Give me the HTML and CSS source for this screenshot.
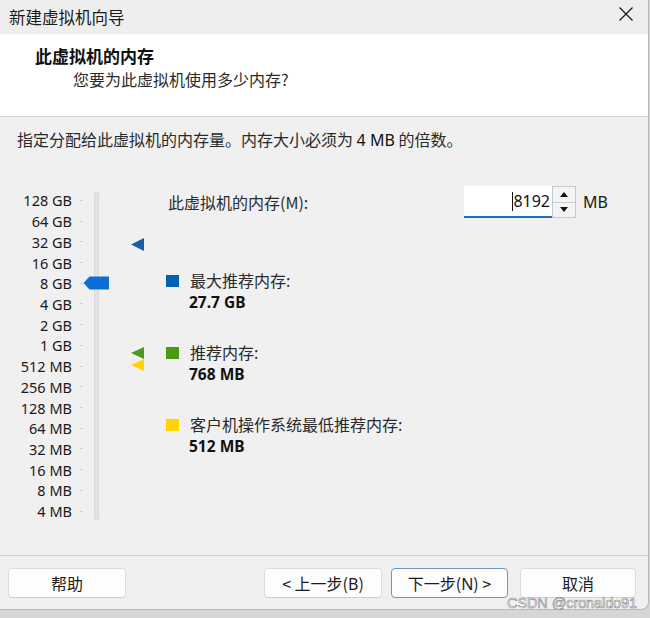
FILE: index.html
```html
<!DOCTYPE html>
<html lang="zh-CN">
<head>
<meta charset="utf-8">
<title>新建虚拟机向导</title>
<link rel="stylesheet" href="styles.css">
</head>
<body>
<div class="window">
  <div class="titlebar">
    <span class="title">新建虚拟机向导</span>
    <svg class="close" width="16" height="16" viewBox="0 0 16 16"><path d="M1.5 1.5 L14.5 14.5 M14.5 1.5 L1.5 14.5" stroke="#1a1a1a" stroke-width="1.3" fill="none"/></svg>
  </div>
  <div class="header">
    <div class="h-title">此虚拟机的内存</div>
    <div class="h-sub">您要为此虚拟机使用多少内存?</div>
  </div>
  <div class="desc">指定分配给此虚拟机的内存量。内存大小必须为 <span class="latin">4 MB</span> 的倍数。</div>
  <div class="main">
    <div class="scale">
      <div class="labels">
        <div class="lab"><span class="txt">128 GB</span><i class="tick"></i></div>
        <div class="lab"><span class="txt">64 GB</span><i class="tick"></i></div>
        <div class="lab"><span class="txt">32 GB</span><i class="tick"></i></div>
        <div class="lab"><span class="txt">16 GB</span><i class="tick"></i></div>
        <div class="lab"><span class="txt">8 GB</span><i class="tick"></i></div>
        <div class="lab"><span class="txt">4 GB</span><i class="tick"></i></div>
        <div class="lab"><span class="txt">2 GB</span><i class="tick"></i></div>
        <div class="lab"><span class="txt">1 GB</span><i class="tick"></i></div>
        <div class="lab"><span class="txt">512 MB</span><i class="tick"></i></div>
        <div class="lab"><span class="txt">256 MB</span><i class="tick"></i></div>
        <div class="lab"><span class="txt">128 MB</span><i class="tick"></i></div>
        <div class="lab"><span class="txt">64 MB</span><i class="tick"></i></div>
        <div class="lab"><span class="txt">32 MB</span><i class="tick"></i></div>
        <div class="lab"><span class="txt">16 MB</span><i class="tick"></i></div>
        <div class="lab"><span class="txt">8 MB</span><i class="tick"></i></div>
        <div class="lab"><span class="txt">4 MB</span><i class="tick"></i></div>
      </div>
      <div class="track"></div>
      <svg class="thumb" style="top:126px" width="26" height="14" viewBox="0 0 26 14"><path d="M0.5 7 L6.5 0.5 L26 0.5 L26 13.5 L6.5 13.5 Z" fill="#0a6fd0"/></svg>
      <svg class="marker" style="top:88px" width="13" height="13" viewBox="0 0 13 13"><path d="M0 6.5 L13 0 L13 13 Z" fill="#1a5ea6"/></svg>
      <svg class="marker" style="top:197px" width="13" height="12" viewBox="0 0 13 12"><path d="M0 6 L13 0 L13 12 Z" fill="#4b9a1b"/></svg>
      <svg class="marker" style="top:209px" width="13" height="12" viewBox="0 0 13 12"><path d="M0 6 L13 0 L13 12 Z" fill="#ffd400"/></svg>
    </div>
    <div class="content">
      <div class="mem-row">
        <span class="mem-label">此虚拟机的内存(M):</span>
        <div class="input"><span class="caret"></span>8192</div>
        <div class="spin">
          <div class="spin-btn"><svg width="8" height="5" viewBox="0 0 8 5"><path d="M4 0 L8 5 L0 5 Z" fill="#111"/></svg></div>
          <div class="spin-btn"><svg width="8" height="5" viewBox="0 0 8 5"><path d="M0 0 L8 0 L4 5 Z" fill="#111"/></svg></div>
        </div>
        <span class="unit">MB</span>
      </div>
      <div class="legend">
        <div class="item">
          <div class="item-head"><i class="sq blue"></i><span class="item-label">最大推荐内存:</span></div>
          <div class="item-val">27.7 GB</div>
        </div>
        <div class="item">
          <div class="item-head"><i class="sq green"></i><span class="item-label">推荐内存:</span></div>
          <div class="item-val">768 MB</div>
        </div>
        <div class="item">
          <div class="item-head"><i class="sq yellow"></i><span class="item-label">客户机操作系统最低推荐内存:</span></div>
          <div class="item-val">512 MB</div>
        </div>
      </div>
    </div>
  </div>
  <div class="footer">
    <button class="btn">帮助</button>
    <div class="spacer"></div>
    <button class="btn">&lt; 上一步(<span class="latin">B</span>)</button>
    <button class="btn default">下一步(<span class="latin">N</span>) &gt;</button>
    <button class="btn">取消</button>
  </div>
</div>
<div class="watermark">CSDN @cronaldo91</div>
</body>
</html>
```
FILE: styles.css
```css
html, body {
  margin: 0;
  padding: 0;
}
body {
  width: 650px;
  height: 618px;
  background: #d6d6d6;
  position: relative;
  overflow: hidden;
  font-family: "Noto Sans", "Noto Sans CJK SC", sans-serif;
  color: #1b1b1b;
}
.window {
  width: 648px;
  height: 609px;
  background: #f0f0f0;
  border-right: 1px solid #b9b9b9;
  border-bottom: 1px solid #b9b9b9;
  border-bottom-right-radius: 8px;
  overflow: hidden;
  display: flex;
  flex-direction: column;
}
.titlebar {
  height: 34px;
  flex: none;
  display: flex;
  align-items: center;
  justify-content: space-between;
  padding: 0 14px 0 9px;
  background: #eeeeee;
}
.title {
  font-family: "Noto Sans CJK SC", sans-serif;
  font-size: 16.5px;
  color: #1a1a1a;
}
.close {
  display: block;
  margin-top: -6px;
}
.header {
  flex: none;
  background: #ffffff;
  border-bottom: 1px solid #d4d4d4;
  box-sizing: border-box;
  height: 83px;
  padding-top: 10px;
}
.h-title {
  font-family: "Noto Sans CJK SC", sans-serif;
  font-weight: 700;
  font-size: 17px;
  line-height: 24px;
  margin-left: 35px;
  color: #111;
}
.h-sub {
  font-family: "Noto Sans CJK SC", sans-serif;
  font-size: 16px;
  line-height: 22px;
  margin-left: 73px;
  color: #2a2a2a;
}
.latin {
  font-family: "Noto Sans", sans-serif;
}
.desc {
  flex: none;
  height: 33px;
  box-sizing: border-box;
  padding: 12px 0 0 17px;
  font-family: "Noto Sans CJK SC", sans-serif;
  font-size: 16px;
  line-height: 20px;
  color: #2a2a2a;
}
.desc .latin {
  color: #111;
}
.main {
  flex: none;
  height: 405px;
  display: flex;
}
.scale {
  position: relative;
  width: 166px;
  flex: none;
}
.labels {
  padding-top: 40px;
  display: flex;
  flex-direction: column;
}
.lab {
  height: 20.73px;
  display: flex;
  align-items: center;
}
.txt {
  width: 72px;
  text-align: right;
  font-size: 14.5px;
  line-height: 20px;
  color: #1a1a1a;
}
.tick {
  display: block;
  width: 3px;
  height: 1px;
  margin-left: 8px;
  background: #cfcfcf;
}
.track {
  position: absolute;
  left: 94px;
  top: 42px;
  width: 5px;
  height: 328px;
  background: #e4e4e4;
  border: 1px solid #dadada;
  box-sizing: border-box;
  border-radius: 2px;
}
.thumb {
  position: absolute;
  left: 83px;
  display: block;
}
.marker {
  position: absolute;
  left: 131px;
  display: block;
}
.content {
  flex: 1;
  padding-top: 36px;
}
.mem-row {
  display: flex;
  align-items: center;
  height: 32px;
}
.mem-label {
  width: 296px;
  padding-left: 2px;
  font-family: "Noto Sans CJK SC", sans-serif;
  font-size: 16px;
  color: #2a2a2a;
}
.input {
  width: 88px;
  height: 32px;
  box-sizing: border-box;
  background: #ffffff;
  border-bottom: 2px solid #1f6fc0;
  text-align: right;
  padding-right: 2px;
  font-size: 16px;
  line-height: 31px;
  color: #111;
}
.caret {
  display: inline-block;
  width: 1px;
  height: 19px;
  background: #111;
  vertical-align: -4px;
}
.spin {
  width: 24px;
  height: 32px;
  box-sizing: border-box;
  border: 1px solid #c9c9c9;
  display: flex;
  flex-direction: column;
  background: #f4f4f4;
}
.spin-btn {
  flex: 1;
  display: flex;
  align-items: center;
  justify-content: center;
}
.spin-btn + .spin-btn {
  border-top: 1px solid #c9c9c9;
}
.unit {
  margin-left: 7px;
  font-size: 16px;
  color: #1a1a1a;
}
.legend {
  margin-top: 51px;
  display: flex;
  flex-direction: column;
  gap: 28px;
}
.item-head {
  display: flex;
  align-items: center;
  height: 22px;
}
.sq {
  display: block;
  width: 13px;
  height: 12px;
  margin-right: 11px;
  margin-top: 1px;
}
.blue { background: #0061ad; }
.green { background: #4a9a18; }
.yellow { background: #ffd400; }
.item-label {
  font-family: "Noto Sans CJK SC", sans-serif;
  font-size: 16px;
  line-height: 22px;
  color: #2a2a2a;
}
.item-val {
  margin-left: 23px;
  height: 22px;
  line-height: 22px;
  font-size: 15.5px;
  font-weight: 700;
  color: #111;
}
.footer {
  flex: none;
  border-top: 1px solid #d2d2d2;
  padding: 12px 12px 0 8px;
  display: flex;
  gap: 9px;
}
.spacer {
  flex: 1;
}
.btn {
  width: 118px;
  height: 30px;
  box-sizing: border-box;
  background: #fdfdfd;
  border: 1px solid #dcdcdc;
  border-bottom-color: #cfcfcf;
  border-radius: 4px;
  font-family: "Noto Sans CJK SC", sans-serif;
  font-size: 16px;
  color: #1b1b1b;
  padding: 0;
  margin: 0;
}
.btn.default {
  width: 117px;
  border-color: #6d97c4;
}
.footer .btn:last-child {
  margin-left: 3px;
  width: 116px;
}
.watermark {
  position: absolute;
  right: 13px;
  top: 595px;
  font-family: "Liberation Sans", sans-serif;
  font-size: 14.5px;
  color: #ffffff;
  -webkit-text-stroke: 0.6px #8a8a8a;
  letter-spacing: -0.1px;
}
```
